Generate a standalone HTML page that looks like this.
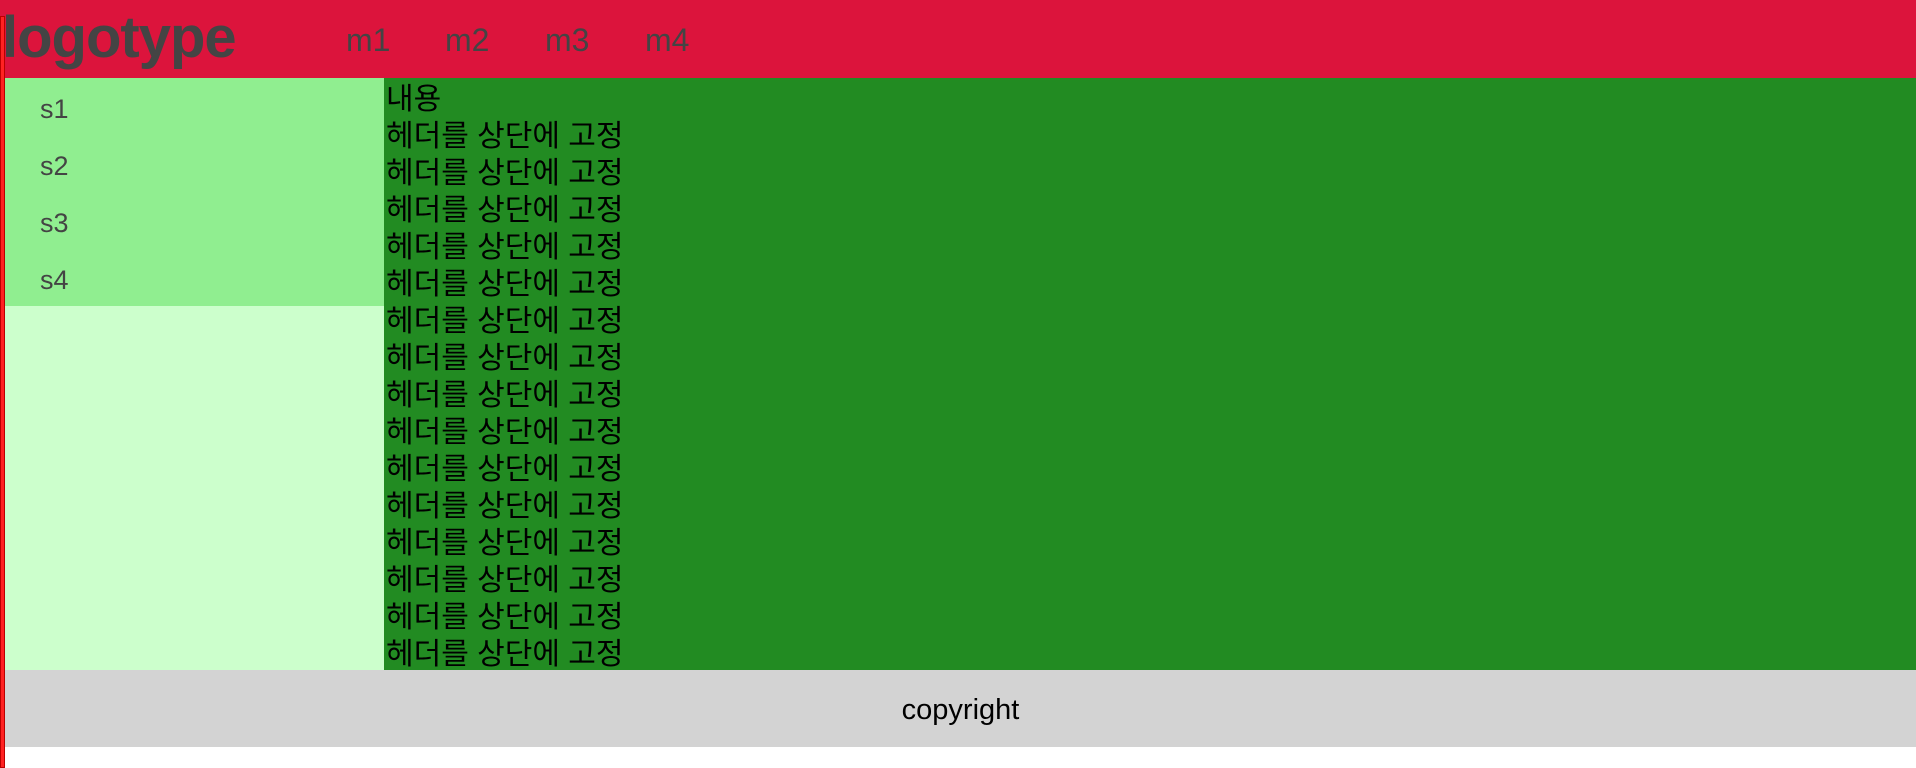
<!DOCTYPE html>
<html><head><meta charset="utf-8"><style>
*{margin:0;padding:0;box-sizing:border-box}
body{width:1916px;height:768px;background:#fff;position:relative;overflow:hidden;font-family:"Liberation Sans","Noto Sans CJK KR",sans-serif}
.hd{position:absolute;left:0;top:0;width:1916px;height:78px;background:#dc143c}
.logo{position:absolute;left:2px;top:4px;font-size:58px;font-weight:bold;color:#444;letter-spacing:-1px}
.m{position:absolute;top:22px;font-size:32px;color:#444}
.bd{position:absolute;left:0;top:16px;width:5px;height:752px;background:#f22;border:1px solid #b00}
.sb{position:absolute;left:5px;top:78px;width:379px;height:228px;background:#90ee90}
.sb2{position:absolute;left:5px;top:306px;width:379px;height:364px;background:#cfc}
.s{position:absolute;left:35px;font-size:27px;color:#444}
.ct{position:absolute;left:384px;top:78px;width:1532px;height:592px;background:#228b22;padding-left:2px;padding-top:3px;font-size:30px;line-height:37px;color:#000;white-space:nowrap;overflow:hidden}
.ft{position:absolute;left:5px;top:670px;width:1911px;height:77px;background:#d3d3d3;text-align:center;line-height:81px;font-size:29px;color:#000}
</style></head><body>
<div class="hd"><div class="logo">logotype</div>
<div class="m" style="left:346px">m1</div><div class="m" style="left:445px">m2</div><div class="m" style="left:545px">m3</div><div class="m" style="left:645px">m4</div></div>
<div class="sb"><div class="s" style="top:16px">s1</div><div class="s" style="top:73px">s2</div><div class="s" style="top:130px">s3</div><div class="s" style="top:187px">s4</div></div>
<div class="sb2"></div>
<div class="ct">내용<br>헤더를 상단에 고정<br>헤더를 상단에 고정<br>헤더를 상단에 고정<br>헤더를 상단에 고정<br>헤더를 상단에 고정<br>헤더를 상단에 고정<br>헤더를 상단에 고정<br>헤더를 상단에 고정<br>헤더를 상단에 고정<br>헤더를 상단에 고정<br>헤더를 상단에 고정<br>헤더를 상단에 고정<br>헤더를 상단에 고정<br>헤더를 상단에 고정<br>헤더를 상단에 고정</div>
<div class="ft">copyright</div>
<div class="bd"></div>
</body></html>
